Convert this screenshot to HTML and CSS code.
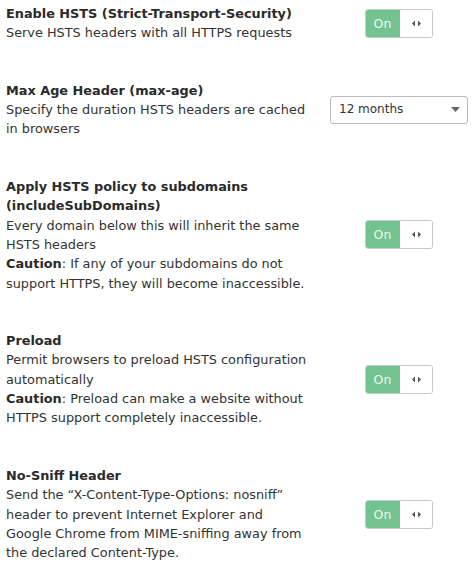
FILE: index.html
```html
<!DOCTYPE html>
<html>
<head>
<meta charset="utf-8">
<link rel="stylesheet" href="styles.css">
</head>
<body>
<div class="settings">
  <div class="row">
    <div class="text">
      <div class="title">Enable HSTS (Strict-Transport-Security)</div>
      <div class="desc">Serve HSTS headers with all HTTPS requests</div>
    </div>
    <div class="control">
      <div class="toggle"><span class="on">On</span><span class="handle"><svg width="9" height="7" viewBox="0 0 9 7"><path d="M3 0.5 L0 3.5 L3 6.5 Z M6 0.5 L9 3.5 L6 6.5 Z" fill="#555"/></svg></span></div>
    </div>
  </div>
  <div class="row">
    <div class="text">
      <div class="title">Max Age Header (max-age)</div>
      <div class="desc">Specify the duration HSTS headers are cached in browsers</div>
    </div>
    <div class="control">
      <div class="select"><span>12 months</span><svg width="9" height="5" viewBox="0 0 9 5"><path d="M0 0 L9 0 L4.5 5 Z" fill="#666"/></svg></div>
    </div>
  </div>
  <div class="row">
    <div class="text">
      <div class="title">Apply HSTS policy to subdomains (includeSubDomains)</div>
      <div class="desc">Every domain below this will inherit the same HSTS headers</div>
      <div class="desc"><b>Caution</b>: If any of your subdomains do not support HTTPS, they will become inaccessible.</div>
    </div>
    <div class="control">
      <div class="toggle"><span class="on">On</span><span class="handle"><svg width="9" height="7" viewBox="0 0 9 7"><path d="M3 0.5 L0 3.5 L3 6.5 Z M6 0.5 L9 3.5 L6 6.5 Z" fill="#555"/></svg></span></div>
    </div>
  </div>
  <div class="row">
    <div class="text">
      <div class="title">Preload</div>
      <div class="desc">Permit browsers to preload HSTS configuration automatically</div>
      <div class="desc"><b>Caution</b>: Preload can make a website without HTTPS support completely inaccessible.</div>
    </div>
    <div class="control">
      <div class="toggle"><span class="on">On</span><span class="handle"><svg width="9" height="7" viewBox="0 0 9 7"><path d="M3 0.5 L0 3.5 L3 6.5 Z M6 0.5 L9 3.5 L6 6.5 Z" fill="#555"/></svg></span></div>
    </div>
  </div>
  <div class="row">
    <div class="text">
      <div class="title">No-Sniff Header</div>
      <div class="desc">Send the “X-Content-Type-Options: nosniff” header to prevent Internet Explorer and Google Chrome from MIME-sniffing away from the declared Content-Type.</div>
    </div>
    <div class="control">
      <div class="toggle"><span class="on">On</span><span class="handle"><svg width="9" height="7" viewBox="0 0 9 7"><path d="M3 0.5 L0 3.5 L3 6.5 Z M6 0.5 L9 3.5 L6 6.5 Z" fill="#555"/></svg></span></div>
    </div>
  </div>
</div>
</body>
</html>
```

FILE: styles.css
```css
html, body {
  margin: 0;
  padding: 0;
  background: #fff;
}
body {
  font-family: "DejaVu Sans", sans-serif;
  font-size: 12.85px;
  line-height: 19.3px;
  color: #333;
}
.settings {
  display: flex;
  flex-direction: column;
  gap: 38.3px;
  padding: 4px 6px 0 6px;
}
.row {
  display: flex;
  align-items: center;
  gap: 20px;
}
.text {
  flex: 1;
  min-width: 0;
}
.title {
  font-weight: bold;
  color: #2a2a2a;
}
.desc b {
  font-weight: bold;
  color: #2a2a2a;
}
.control {
  width: 138px;
  flex: none;
  display: flex;
  justify-content: center;
}
.toggle {
  display: flex;
  width: 68px;
  height: 29px;
  box-sizing: border-box;
  border: 1px solid #c8c8c8;
  border-radius: 3px;
  overflow: hidden;
}
.toggle .on {
  width: 35px;
  background: #73c391;
  color: #eaf7ee;
  display: flex;
  align-items: center;
  justify-content: center;
  font-size: 12.5px;
  margin: -1px 0 -1px -1px;
}
.toggle .handle {
  flex: 1;
  display: flex;
  align-items: center;
  justify-content: center;
  background: #fff;
}
.select {
  width: 138px;
  height: 28px;
  box-sizing: border-box;
  border: 1px solid #bbb;
  border-radius: 3px;
  display: flex;
  align-items: center;
  justify-content: space-between;
  padding: 0 7px 0 8px;
  font-size: 12px;
  color: #333;
}
```
